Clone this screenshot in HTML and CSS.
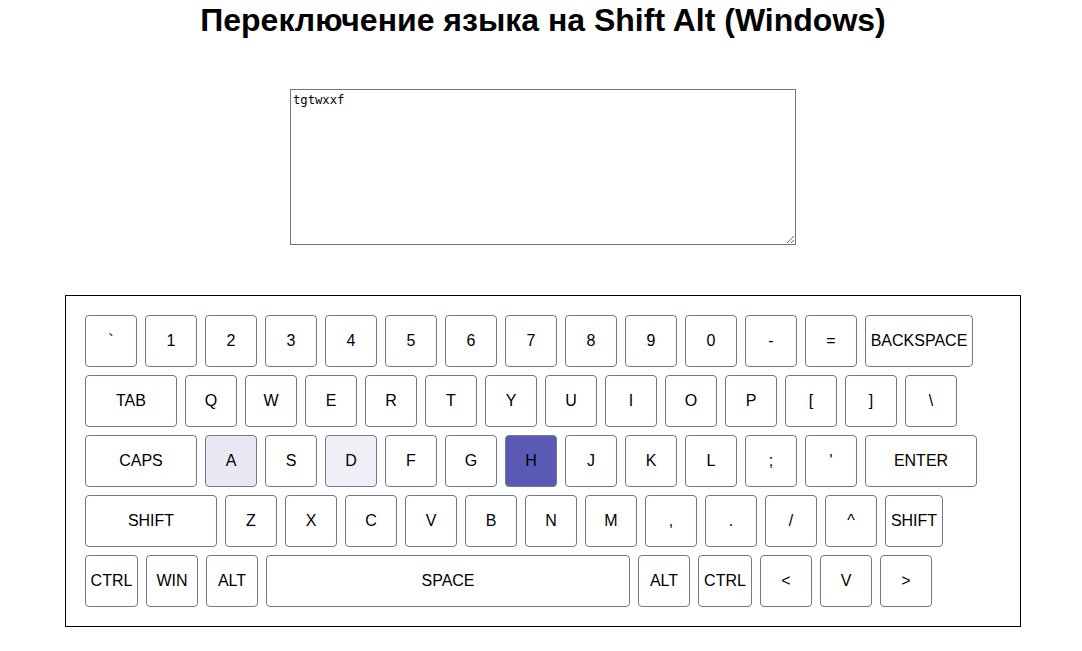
FILE: index.html
```html
<!DOCTYPE html>
<html lang="ru">
<head>
<meta charset="utf-8">
<title>Переключение языка</title>
<link rel="stylesheet" href="styles.css">
</head>
<body>
<div class="page">
  <h1 class="title">Переключение языка на Shift Alt (Windows)</h1>
  <div class="editor">
    <textarea class="input">tgtwxxf</textarea>
  </div>
  <div class="keyboard">
    <div class="row">
      <div class="key">`</div><div class="key">1</div><div class="key">2</div><div class="key">3</div><div class="key">4</div><div class="key">5</div><div class="key">6</div><div class="key">7</div><div class="key">8</div><div class="key">9</div><div class="key">0</div><div class="key">-</div><div class="key">=</div><div class="key w-backspace">BACKSPACE</div>
    </div>
    <div class="row">
      <div class="key w-tab">TAB</div><div class="key">Q</div><div class="key">W</div><div class="key">E</div><div class="key">R</div><div class="key">T</div><div class="key">Y</div><div class="key">U</div><div class="key">I</div><div class="key">O</div><div class="key">P</div><div class="key">[</div><div class="key">]</div><div class="key">\</div>
    </div>
    <div class="row">
      <div class="key w-caps">CAPS</div><div class="key hl-1">A</div><div class="key">S</div><div class="key hl-2">D</div><div class="key">F</div><div class="key">G</div><div class="key active">H</div><div class="key">J</div><div class="key">K</div><div class="key">L</div><div class="key">;</div><div class="key">'</div><div class="key w-enter">ENTER</div>
    </div>
    <div class="row">
      <div class="key w-lshift">SHIFT</div><div class="key">Z</div><div class="key">X</div><div class="key">C</div><div class="key">V</div><div class="key">B</div><div class="key">N</div><div class="key">M</div><div class="key">,</div><div class="key">.</div><div class="key">/</div><div class="key">^</div><div class="key w-rshift">SHIFT</div>
    </div>
    <div class="row">
      <div class="key w-lctrl">CTRL</div><div class="key">WIN</div><div class="key">ALT</div><div class="key w-space">SPACE</div><div class="key">ALT</div><div class="key w-rctrl">CTRL</div><div class="key">&lt;</div><div class="key">V</div><div class="key">&gt;</div>
    </div>
  </div>
</div>
</body>
</html>
```

FILE: styles.css
```css
html, body {
  margin: 0;
  padding: 0;
  background: #ffffff;
}

.page {
  padding-left: 4px;
  font-family: "Liberation Sans", Arial, sans-serif;
  color: #000;
}

.title {
  margin: 0;
  padding-top: 2px;
  font-size: 32px;
  font-weight: bold;
  line-height: 37px;
  text-align: center;
}

.editor {
  display: flex;
  justify-content: center;
  margin-top: 50px;
}

.input {
  width: 500px;
  height: 150px;
  padding: 2px;
  margin: 0;
  border: 1px solid #767676;
  font-family: "DejaVu Sans Mono", "Liberation Mono", monospace;
  font-size: 12.2px;
  line-height: 16px;
  color: #000;
  resize: both;
  outline: none;
  display: block;
}

.keyboard {
  box-sizing: border-box;
  width: 956px;
  margin: 50px auto 0;
  border: 1px solid #000;
  padding: 15px;
}

.row {
  display: flex;
}

.key {
  box-sizing: border-box;
  width: 52px;
  height: 52px;
  margin: 4px;
  border: 1px solid #6e7a88;
  border-radius: 4px;
  background: #fff;
  display: flex;
  align-items: center;
  justify-content: center;
  font-size: 16px;
  white-space: nowrap;
}

.w-backspace { width: 108px; }
.w-tab { width: 92px; }
.w-caps { width: 112px; }
.w-enter { width: 112px; }
.w-lshift { width: 132px; }
.w-rshift { width: 58px; }
.w-lctrl { width: 53px; }
.w-space { width: 364px; }
.w-rctrl { width: 54px; }

.hl-1 { background: #e8e8f4; }
.hl-2 { background: #efeff8; }
.active { background: #5a5ab4; }
```
